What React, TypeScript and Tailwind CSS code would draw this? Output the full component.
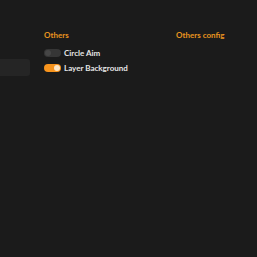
import React from "react";

function Toggle({ on }: { on: boolean }) {
  return (
    <div
      className={
        "w-[17px] h-[8px] rounded-full flex items-center px-[1px] " +
        (on ? "bg-[#f7941d] justify-end" : "bg-[#363636] justify-start")
      }
    >
      <div className={"w-[6px] h-[6px] rounded-full " + (on ? "bg-[#fde7c8]" : "bg-[#464646]")} />
    </div>
  );
}

export default function App() {
  return (
    <div
      className="w-[257px] h-[257px] bg-[#1b1b1b] flex"
      style={{ fontFamily: "Lato, 'Open Sans', sans-serif" }}
    >
      <div className="w-[30px] pt-[59px] shrink-0">
        <div className="h-[17px] bg-[#252525] rounded-r-[3px]" />
      </div>
      <div className="ml-[14px] pt-[30px] w-[132px] shrink-0">
        <div className="text-[8px] leading-[10px] font-bold text-[#e8941f]">Others</div>
        <div className="mt-[9px] flex flex-col gap-[7px]">
          <div className="flex items-center h-[8px]">
            <Toggle on={false} />
            <span className="ml-[3px] text-[8px] font-bold text-[#e6e6e6]">Circle Aim</span>
          </div>
          <div className="flex items-center h-[8px]">
            <Toggle on={true} />
            <span className="ml-[3px] text-[8px] font-bold text-[#e6e6e6]">Layer Background</span>
          </div>
        </div>
      </div>
      <div className="pt-[30px]">
        <div className="text-[8px] leading-[10px] font-bold text-[#e8941f]">Others config</div>
      </div>
    </div>
  );
}
